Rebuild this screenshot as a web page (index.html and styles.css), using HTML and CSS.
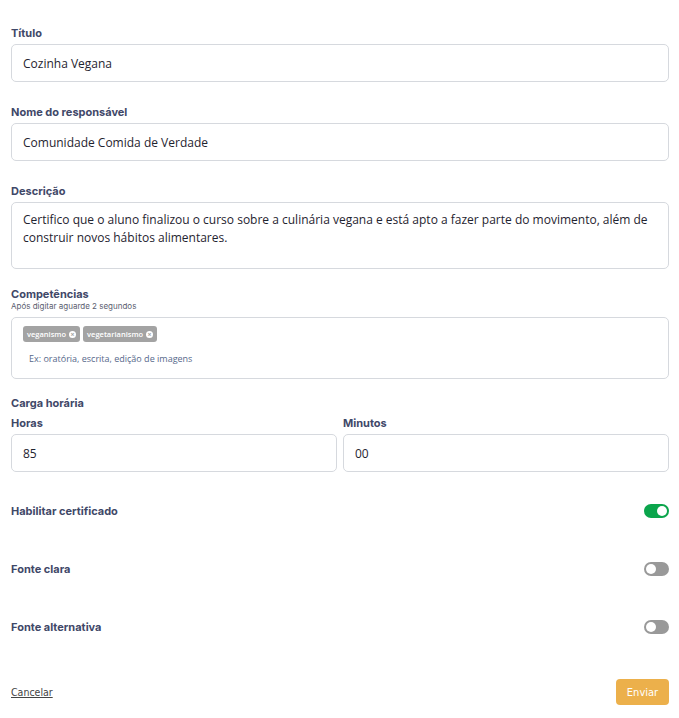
FILE: index.html
```html
<!DOCTYPE html>
<html lang="pt-BR">
    <head>
        <meta charset="UTF-8" />
        <meta name="viewport" content="width=device-width, initial-scale=1.0" />
        <title>Certificado</title>
        <link rel="stylesheet" href="styles.css">
    </head>
    <body>
        <form class="cert-form">
            <div class="form-group">
                <label for="titulo">Título</label>
                <input type="text" id="titulo" value="Cozinha Vegana" />
            </div>

            <div class="form-group">
                <label for="responsavel">Nome do responsável</label>
                <input type="text" id="responsavel" value="Comunidade Comida de Verdade" />
            </div>

            <div class="form-group compact">
                <label for="descricao">Descrição</label>
                <textarea id="descricao">Certifico que o aluno finalizou o curso sobre a culinária vegana e está apto a fazer parte do movimento, além de construir novos hábitos alimentares.</textarea>
            </div>

            <div class="form-group compact tags-group">
                <label class="label-tight" for="competencias">Competências</label>
                <span class="hint">Após digitar aguarde 2 segundos</span>
                <div class="tags-box">
                    <div class="tags">
                        <span class="tag">veganismo <i class="tag-x">×</i></span>
                        <span class="tag">vegetarianismo <i class="tag-x">×</i></span>
                    </div>
                    <input type="text" id="competencias" class="tags-input" placeholder="Ex: oratória, escrita, edição de imagens" />
                </div>
            </div>

            <div class="form-group">
                <span class="section-title">Carga horária</span>
                <div class="row">
                    <div class="col">
                        <label for="horas">Horas</label>
                        <input type="text" id="horas" value="85" />
                    </div>
                    <div class="col">
                        <label for="minutos">Minutos</label>
                        <input type="text" id="minutos" value="00" />
                    </div>
                </div>
            </div>

            <div class="switch-row first">
                <span class="switch-label">Habilitar certificado</span>
                <label class="switch">
                    <input type="checkbox" checked />
                    <span class="slider"></span>
                </label>
            </div>

            <div class="switch-row">
                <span class="switch-label">Fonte clara</span>
                <label class="switch">
                    <input type="checkbox" />
                    <span class="slider"></span>
                </label>
            </div>

            <div class="switch-row">
                <span class="switch-label">Fonte alternativa</span>
                <label class="switch">
                    <input type="checkbox" />
                    <span class="slider"></span>
                </label>
            </div>

            <div class="actions">
                <a href="#" class="cancel">Cancelar</a>
                <button type="submit">Enviar</button>
            </div>
        </form>
    </body>
</html>
```

FILE: styles.css
```css
body {
    margin: 0;
    padding: 26px 10px 20px 11px;
    background: white;
    font-family: "Open Sans", sans-serif;
    color: #1f2430;
}

.form-group {
    margin-bottom: 23px;
}

.form-group.compact {
    margin-bottom: 18px;
}

.form-group.tags-group {
    margin-bottom: 17px;
}

label,
.section-title,
.switch-label {
    display: block;
    font-family: Inter, sans-serif;
    font-size: 11px;
    font-weight: 700;
    line-height: 14px;
    color: #3f4868;
    margin-bottom: 4px;
}

.label-tight {
    margin-bottom: 0;
}

.hint {
    display: block;
    font-family: Inter, sans-serif;
    font-size: 8px;
    line-height: 11px;
    color: #5b6070;
    margin-bottom: 5px;
}

input,
textarea {
    display: block;
    width: 100%;
    height: 38px;
    box-sizing: border-box;
    padding: 0 11px;
    border: 1px solid #d6d9de;
    border-radius: 5px;
    font-family: "Open Sans", sans-serif;
    font-size: 12px;
    color: #1f2430;
    background: white;
}

textarea {
    height: 67px;
    padding: 8px 11px;
    line-height: 18px;
    resize: none;
}

.tags-box {
    height: 62px;
    box-sizing: border-box;
    border: 1px solid #d6d9de;
    border-radius: 5px;
    padding: 8px 11px;
}

.tags {
    display: flex;
    gap: 3px;
}

.tag {
    display: inline-flex;
    align-items: center;
    gap: 3px;
    height: 16px;
    padding: 0 4px;
    border-radius: 3px;
    background: #a3a3a3;
    color: white;
    font-size: 7.5px;
    font-weight: 600;
}

.tag-x {
    display: inline-flex;
    align-items: center;
    justify-content: center;
    width: 7px;
    height: 7px;
    border-radius: 50%;
    background: white;
    color: #a3a3a3;
    font-style: normal;
    font-size: 7px;
    line-height: 7px;
    font-weight: 700;
}

.tags-input {
    height: 24px;
    border: none;
    padding: 0 6px;
    margin-top: 4px;
    font-size: 9px;
}

.tags-input::placeholder {
    color: #56688a;
}

.section-title {
    margin-bottom: 6px;
}

.row {
    display: flex;
    gap: 6px;
}

.col {
    flex: 1;
}

.switch-row {
    display: flex;
    justify-content: space-between;
    align-items: center;
    height: 20px;
    margin-bottom: 38px;
}

.switch-row.first {
    margin-top: 29px;
}

.switch-label {
    margin: 0;
}

.switch {
    position: relative;
    width: 25px;
    height: 14px;
    margin: 0;
}

.switch input {
    display: none;
}

.slider {
    position: absolute;
    inset: 0;
    border-radius: 7px;
    background: #999;
}

.slider::before {
    content: "";
    position: absolute;
    top: 2px;
    left: 2px;
    width: 10px;
    height: 10px;
    border-radius: 50%;
    background: white;
}

.switch input:checked + .slider {
    background: #0ba54c;
}

.switch input:checked + .slider::before {
    left: 13px;
}

.actions {
    display: flex;
    justify-content: space-between;
    align-items: center;
    margin-top: 42px;
}

.cancel {
    font-family: "DejaVu Sans Condensed", "DejaVu Sans", sans-serif;
    font-size: 10.5px;
    color: #444;
}

button {
    width: 53px;
    height: 26px;
    border: none;
    border-radius: 4px;
    background: #ecb04b;
    color: white;
    font-family: "DejaVu Sans Condensed", "DejaVu Sans", sans-serif;
    font-size: 11px;
}
```
